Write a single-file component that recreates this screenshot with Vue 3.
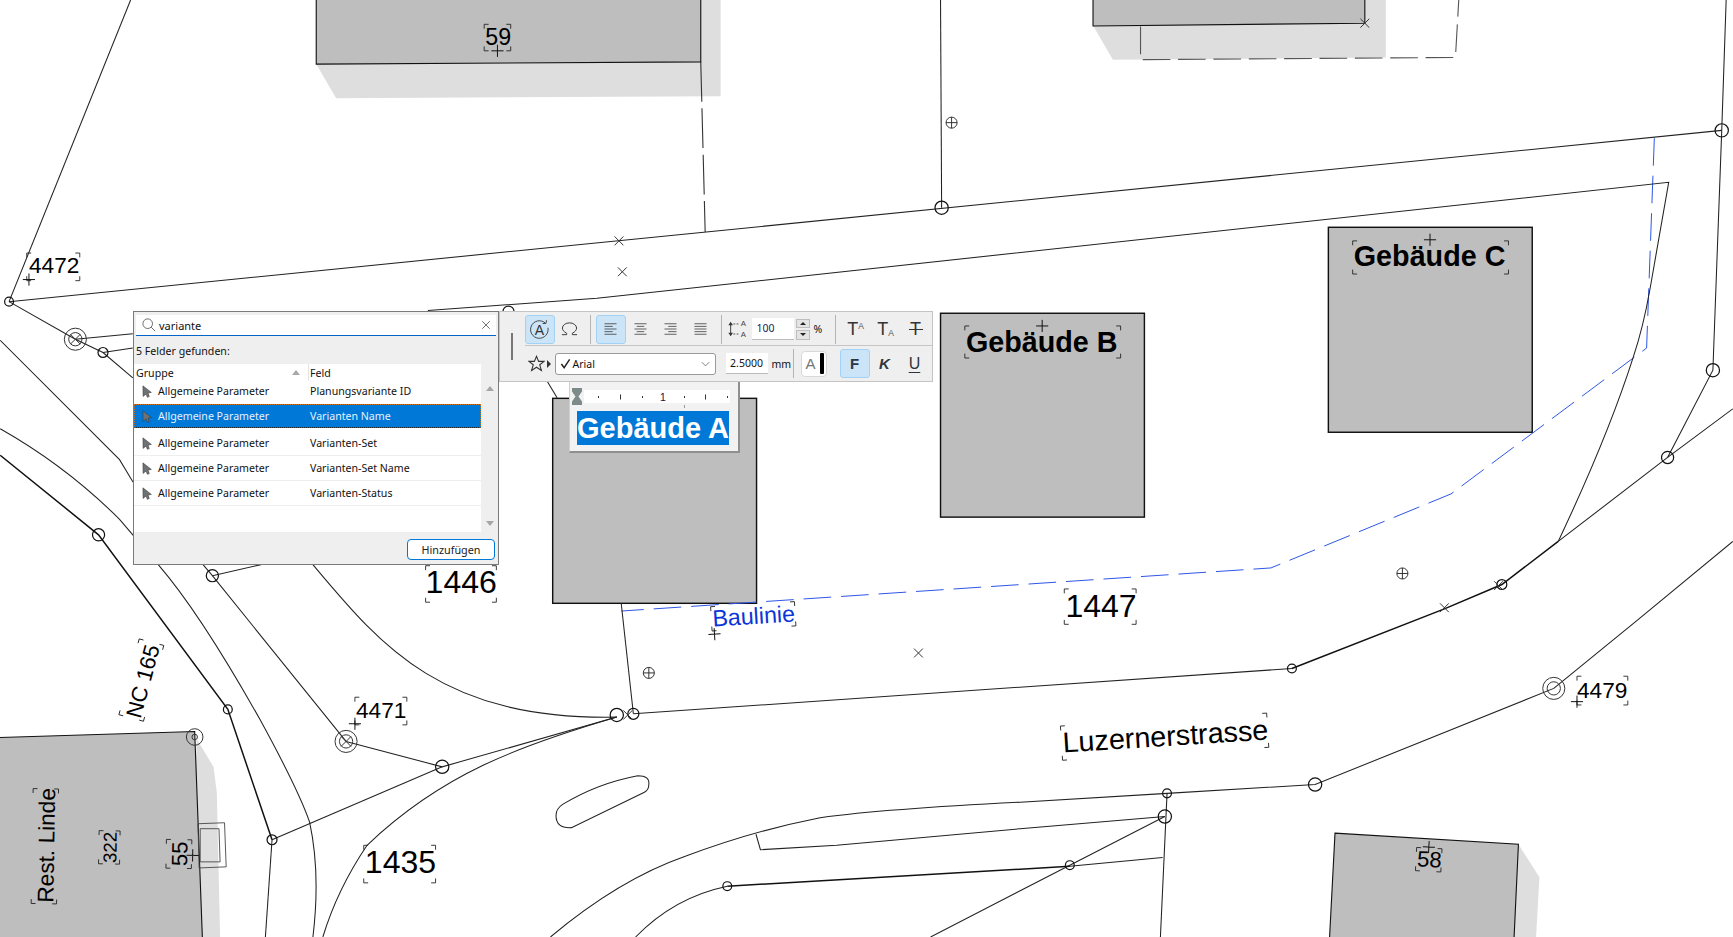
<script setup>
const thin = [
  'M118 0 L8 273',
  'M8 273 L1558 118',
  'M387 281 L540 270 L1510 165 L1493 262 Q1487 296 1478 323 Q1455 395 1410 490',
  'M851 0 L852 188',
  'M1562 0 L1558 118 L1550 335 L1509 414',
  'M1568 370 L1509 414 L1410 490',
  'M1169 605 L573 646',
  'M8 273 L68 307 L93 319 L120 342',
  'M68 307 L120 302',
  'M93 319 L120 315',
  'M0 308 L108 416 L120 436 L192 521 L313 671',
  'M0 388 Q60 422 108 470 L143 511 Q181 555 235 651 Q270 715 280 744 Q290 790 283 848',
  'M246 760 L240 848',
  'M192 521 L236 511',
  'M283 511 C345 585 400 652 558 649',
  'M562 546 L573 646',
  'M558 649 L400 694 L313 671',
  'M400 694 L246 760',
  'M558 649 C470 675 400 700 332 765 Q305 805 292 848',
  'M1406 623 L1190 710 L1056 718 L923 726 Q802 732 742 740 Q681 752 620 775 Q560 796 498 848',
  'M1406 623 L1482 561 L1568 490',
  'M684 755 L688 769 L757 765 L923 750 L1054 739',
  'M1056 718 L1050 848',
  'M1054 739 L968 783 L842 848',
  'M1052 776 L968 784',
  'M658 802 Q610 812 575 848',
  'M495 345 L504 360',
  'M509 728 Q540 709 577 702 Q588 702 587 710 Q587 715 583 717 L517 749 Q503 750 503 738 Q503 732 509 728Z'
]
const thick = [
  'M1410 490 L1359 529 L1307 551 L1169 605',
  'M658 802 L968 784',
  'M0 412 L89 484 L206 642 L246 760'
]
const circles = [
  [8, 273, 4], [93, 319, 4.5], [852, 188, 6], [1558, 118, 6], [1550, 335, 6], [1509, 414, 5.5],
  [1359, 529, 4.5], [1169, 605, 4], [573, 646, 5], [558, 647, 6], [89, 484, 5.5], [206, 642, 4],
  [192, 521, 5.5], [400, 694, 6], [246, 760, 4.5], [1190, 710, 6], [1056, 718, 4], [1054, 739, 6],
  [968, 783, 4], [658, 802, 4], [460, 282, 5]
]
const ringed = [[68, 307, 10, 6, 1], [313, 671, 10, 6, 1], [1406, 623, 10, 6, 0], [176, 667, 7.5, 2.5, 0]]
const targets = [[861, 111], [587, 609], [1269, 519]]
const crosses = [[560, 218], [563, 246], [831, 591], [1307, 550], [1235, 21], [568, 647], [1356, 530]]

const corners = (x0, y0, x1, y1) =>
  `M${x0} ${y0 + 4}V${y0}H${x0 + 4}M${x1 - 4} ${y0}H${x1}V${y0 + 4}M${x1} ${y1 - 4}V${y1}H${x1 - 4}M${x0 + 4} ${y1}H${x0}V${y1 - 4}`

const labels = [
  { t: '59', x: 439, y: 41, s: 21, r: 0, b: [-1, -19, 23, 5], p: [11, 5] },
  { t: '4472', x: 26, y: 247, s: 20.5, r: 0, b: [-2, -18, 46, 7], p: [0, 6] },
  { t: '4471', x: 322, y: 650, s: 20.5, r: 0, b: [-1, -19, 46, 6], p: [-1, 5] },
  { t: '4479', x: 1427, y: 632, s: 20.5, r: 0, b: [0, -20, 46, 6], p: [0, 3] },
  { t: '1446', x: 385, y: 537, s: 29, r: 0, b: [0, -25, 64, 8] },
  { t: '1447', x: 964, y: 558, s: 29, r: 0, b: [-1, -25, 64, 7] },
  { t: '1435', x: 330, y: 790, s: 29, r: 0, b: [-1, -25, 64, 9] },
  { t: 'Luzernerstrasse', x: 962, y: 681, s: 26, r: -3.6, b: [-1, -24, 186, 7] },
  { t: 'Baulinie', x: 645, y: 567, s: 21, r: -3.5, b: [-1, -18, 75, 4], p: [1, 7], c: '#0a35d8' },
  { t: 'NC 165', x: 127, y: 651, s: 20, r: -75, b: [-1, -20, 70, 3] },
  { t: 'Rest. Linde', x: 48, y: 817, s: 20.5, r: -89, b: [-1, -20, 103, 3] },
  { t: '322', x: 105, y: 781, s: 16.8, r: -89, b: [-1, -16, 29, 3] },
  { t: '55', x: 169, y: 784, s: 20, r: -89, b: [-2, -19, 24, 4], p: [10, 5] },
  { t: '58', x: 1282, y: 784, s: 20, r: 3, b: [-1, -17, 22, 4], p: [10, -18] },
  { t: 'Gebäude C', x: 1225, y: 241, s: 26, r: 0, w: 700, b: [-1, -23, 140, 7], p: [69, -24] },
  { t: 'Gebäude B', x: 874, y: 319, s: 26, r: 0, w: 700, b: [-1, -24, 140, 5], p: [69, -24] }
]

const rows = [
  { group: 'Allgemeine Parameter', field: 'Planungsvariante ID' },
  { group: 'Allgemeine Parameter', field: 'Varianten Name', sel: true },
  { group: 'Allgemeine Parameter', field: 'Varianten-Set' },
  { group: 'Allgemeine Parameter', field: 'Varianten-Set Name' },
  { group: 'Allgemeine Parameter', field: 'Varianten-Status' }
]
const alignments = [
  { active: true, d: 'M2 2H18M2 5.5H13M2 9H18M2 12.5H13M2 16H18' },
  { d: 'M2 2H18M5 5.5H15M2 9H18M5 12.5H15M2 16H18' },
  { d: 'M2 2H18M7 5.5H18M2 9H18M7 12.5H18M2 16H18' },
  { d: 'M2 2H18M2 5.5H18M2 9H18M2 12.5H18M2 16H18' }
]
const rulerTicks = [
  { x: 14, h: 2 }, { x: 36, h: 5 }, { x: 58, h: 2 }, { x: 100, h: 2 }, { x: 121, h: 5 }, { x: 143, h: 2 }
]
</script>

<template>
  <div class="page">
    <svg class="plan" viewBox="0 0 1568 848">
      <g class="shadow">
        <polygon points="286,58 304,89 652,87 652,0 286,0" />
        <polygon points="989,23 1007,54 1254,52 1254,0 989,0" />
        <polygon points="178,669 193,694 196,717 199,848 170,848" />
        <polygon points="1374,764 1393,794 1390,848 1360,848" />
      </g>
      <g class="building thin">
        <polygon points="286,-2 634,-2 634,56 286,58" />
        <polygon points="989,-2 1235,-2 1235,21 989,23.5" />
        <polygon points="-2,667.5 176,662 183,850 -2,850" />
        <polygon points="1208,754 1374,764 1370,850 1203,850" />
      </g>
      <g class="building solid">
        <rect x="500" y="360.5" width="184.5" height="185.5" />
        <rect x="851" y="283.5" width="184.5" height="184.5" />
        <rect x="1202" y="205.7" width="184.5" height="185.5" />
      </g>
      <path class="annex" d="M179 745.5 L203 744.6 L204.5 784.5 L180 785.5Z M181 750 L198 750 L199 780 L181 780Z" />
      <path class="dash-black" d="M634 56 L638 210" />
      <path class="dash-gray" d="M1032 24 L1032 54 L1317 52 L1320 0" />
      <path class="line-blue" d="M1497 125 L1490 315 L1313 447 L1150 514 L562 553" />
      <path v-for="(d, i) in thin" :key="'t' + i" class="line" :d="d" />
      <path v-for="(d, i) in thick" :key="'k' + i" class="line heavy" :d="d" />
      <circle v-for="(c, i) in circles" :key="'c' + i" class="mark" :cx="c[0]" :cy="c[1]" :r="c[2]" />
      <g v-for="(c, i) in ringed" :key="'r' + i" class="mark-thin">
        <circle :cx="c[0]" :cy="c[1]" :r="c[2]" />
        <circle :cx="c[0]" :cy="c[1]" :r="c[3]" />
        <path v-if="c[4]" :d="`M${c[0] - 4.5} ${c[1] - 4.5}l9 9m0 -9l-9 9`" />
      </g>
      <g v-for="(c, i) in targets" :key="'g' + i" class="mark-thin">
        <circle :cx="c[0]" :cy="c[1]" r="5" />
        <path :d="`M${c[0] - 5} ${c[1]}h10M${c[0]} ${c[1] - 5}v10`" />
      </g>
      <path
        v-for="(c, i) in crosses"
        :key="'x' + i"
        class="mark-thin"
        :d="`M${c[0] - 4} ${c[1] - 4}l8 8m0 -8l-8 8`"
      />
      <g v-for="l in labels" :key="l.t" :transform="`translate(${l.x} ${l.y}) rotate(${l.r})`">
        <path class="corners" :d="corners(...l.b)" />
        <path v-if="l.p" class="plus" :d="`M${l.p[0] - 5.5} ${l.p[1]}h11M${l.p[0]} ${l.p[1] - 5.5}v11`" />
        <text class="label" :font-size="l.s" :font-weight="l.w || 400" :fill="l.c || '#000'">{{ l.t }}</text>
      </g>
    </svg>

    <section class="fields">
      <div class="search">
        <svg class="search-icon" viewBox="0 0 16 16">
          <circle cx="6.5" cy="6.5" r="5.5" />
          <path d="M10.5 10.5L15 15" />
        </svg>
        <span class="search-text">variante</span>
        <svg class="search-clear" viewBox="0 0 12 12"><path d="M1.5 1.5l9 9m0-9l-9 9" /></svg>
      </div>
      <div class="found">5 Felder gefunden:</div>
      <div class="list-wrap">
        <div class="list">
          <div class="head">
            <div class="head-group">
              <span>Gruppe</span>
              <i class="sort"></i>
            </div>
            <div class="head-field">Feld</div>
          </div>
          <div v-for="r in rows" :key="r.field" class="row" :class="{ sel: r.sel }">
            <svg class="pointer" viewBox="0 0 11 14">
              <path d="M1 .8 L10.3 8 L6.6 8.7 L8 12.6 L5.9 13.4 L4.5 9.8 L1.2 12.4Z" />
            </svg>
            <span class="cell-group">{{ r.group }}</span>
            <span class="cell-field">{{ r.field }}</span>
          </div>
        </div>
        <div class="scroll">
          <i class="arrow up"></i>
          <i class="arrow down"></i>
        </div>
      </div>
      <div class="footer"><button class="add">Hinzufügen</button></div>
    </section>

    <section class="toolbar">
      <i class="grip"></i>
      <div class="bars">
        <div class="bar top">
          <span class="tbtn on big">
            <svg viewBox="0 0 24 24" class="ico22">
              <path class="ico-line" d="M18.5 4.6A10 10 0 1 0 21.6 10" />
              <path class="ico-line" d="M15.5 5.2L19.4 5L20 1.4" />
              <text x="12" y="18.5" text-anchor="middle" class="ico-a">A</text>
            </svg>
          </span>
          <span class="tbtn big">
            <svg viewBox="0 0 18 14" class="ico-omega">
              <path class="ico-line" d="M1 13H6V11.5C3 10 1.5 8 1.5 6A7.5 5.5 0 0 1 16.5 6C16.5 8 15 10 12 11.5V13H17" />
            </svg>
          </span>
          <i class="sep"></i>
          <span v-for="(a, i) in alignments" :key="i" class="tbtn big" :class="{ on: a.active }">
            <svg viewBox="0 0 20 18" class="ico-align"><path class="ico-line" :d="a.d" /></svg>
          </span>
          <i class="sep"></i>
          <svg viewBox="0 0 24 22" class="ico-spacing">
            <path class="ico-solid" d="M4 3L6.5 7H1.5ZM4 19L1.5 15H6.5ZM3.5 6H4.5V16H3.5Z" />
            <path class="ico-dash" d="M7 5.5H14M7 16.5H14" />
            <text x="15" y="8" class="ico-small">A</text>
            <text x="15" y="20" class="ico-small">A</text>
          </svg>
          <span class="num pct">100</span>
          <span class="spin">
            <i class="spin-btn"><b class="tri-up"></b></i>
            <i class="spin-btn"><b class="tri-down"></b></i>
          </span>
          <span class="unit percent">%</span>
          <i class="sep"></i>
          <span class="glyph"><span class="big-t">T</span><sup class="small-a">A</sup></span>
          <span class="glyph"><span class="big-t">T</span><sub class="small-a">A</sub></span>
          <span class="glyph strike"><span class="big-t">T</span></span>
        </div>
        <div class="bar bottom">
          <svg viewBox="0 0 16 16" class="star">
            <path d="M8 1.2L10 6H15L11 9.2L12.6 14.6L8 11.5L3.4 14.6L5 9.2L1 6H6Z" />
          </svg>
          <i class="play"></i>
          <div class="combo">
            <svg viewBox="0 0 12 12" class="check"><path d="M1.5 6.5L4.5 10.5L10.5 1.5" /></svg>
            <span>Arial</span>
            <svg viewBox="0 0 12 8" class="chev"><path d="M1 1.5L6 6.5L11 1.5" /></svg>
          </div>
          <span class="num size">2.5000</span>
          <span class="unit mm">mm</span>
          <i class="sep short"></i>
          <span class="colour"><span>A</span><i></i></span>
          <span class="tbtn style on"><b>F</b></span>
          <span class="tbtn style"><b><em>K</em></b></span>
          <span class="tbtn style"><span class="under">U</span></span>
        </div>
      </div>
    </section>

    <section class="editor">
      <i class="hour"></i>
      <div class="ruler">
        <i v-for="t in rulerTicks" :key="t.x" class="tick" :style="{ left: t.x + 'px', height: t.h + 'px' }"></i>
        <span class="one">1</span>
        <i class="tick-below"></i>
      </div>
      <div class="textarea"><span class="selected">Gebäude A</span></div>
    </section>
  </div>
</template>

<style scoped>
.page {
  position: relative;
  width: 1733px;
  height: 937px;
  overflow: hidden;
  background: #fff;
  font-family: "Noto Sans", "Open Sans", sans-serif;
  color: #111;
}
.plan { display: block; width: 1733px; height: 937px; }
.shadow polygon { fill: #dedede; }
.building polygon, .building rect { fill: #bebebe; stroke: #111; }
.building.thin polygon { stroke-width: 1; }
.building.solid rect { stroke-width: 1.3; }
.annex { fill: none; stroke: #444; stroke-width: 0.8; }
.line { fill: none; stroke: #222; stroke-width: 0.95; }
.line.heavy { stroke-width: 1.35; stroke: #111; }
.dash-black { fill: none; stroke: #333; stroke-width: 1; stroke-dasharray: 36 6; }
.dash-gray { fill: none; stroke: #555; stroke-width: 1; stroke-dasharray: 25 7; }
.line-blue { fill: none; stroke: #2c55e6; stroke-width: 0.9; stroke-dasharray: 25 9; }
.mark { fill: none; stroke: #111; stroke-width: 1.1; }
.mark-thin circle, .mark-thin path, path.mark-thin { fill: none; stroke: #333; stroke-width: 0.9; }
.corners { fill: none; stroke: #222; stroke-width: 0.8; }
.plus { fill: none; stroke: #111; stroke-width: 0.9; }
.label { font-family: "Liberation Sans", Arial, sans-serif; }

.fields {
  position: absolute;
  left: 133px;
  top: 311px;
  width: 366px;
  height: 254px;
  box-sizing: border-box;
  border: 1.5px solid #7a7a7a;
  background: #efefef;
  display: flex;
  flex-direction: column;
  font-size: 10.6px;
}
.search {
  margin: 3px 2px 0 2px;
  height: 21px;
  box-sizing: border-box;
  padding-left: 6px;
  padding-right: 5px;
  background: #fff;
  border-bottom: 1.5px solid #0064c8;
  display: flex;
  align-items: center;
  gap: 3px;
  font-size: 11px;
}
.search-icon { width: 14px; height: 14px; fill: none; stroke: #666; stroke-width: 1.1; }
.search-text { flex: 1; }
.search-clear { width: 10px; height: 10px; fill: none; stroke: #555; stroke-width: 1; }
.found { padding: 6px 0 4px 2px; line-height: 18px; height: 28px; box-sizing: border-box; }
.list-wrap { display: flex; height: 168px; flex: none; }
.list { width: 347px; background: #fff; }
.head { display: flex; height: 17px; line-height: 18px; }
.head-group {
  width: 175px;
  padding-left: 2px;
  display: flex;
  justify-content: space-between;
  align-items: center;
  box-sizing: border-box;
  border-right: 1px solid #e4e4e4;
  padding-right: 8px;
}
.head-field { padding-left: 1px; }
.sort {
  width: 0; height: 0;
  border-left: 4.5px solid transparent;
  border-right: 4.5px solid transparent;
  border-bottom: 5px solid #a8a8a8;
}
.row {
  display: flex;
  align-items: center;
  height: 25px;
  box-sizing: border-box;
  border-bottom: 1px solid #eee;
  padding-left: 8px;
}
.row:nth-child(2) { height: 20px; margin-bottom: 3px; border-bottom: 0; }
.row.sel {
  height: 24px;
  background: #0078d7;
  color: #e6f2fc;
  border: 1px dotted #c8701e;
  border-bottom-color: #222;
  margin-bottom: 3px;
  padding-left: 7px;
}
.pointer { width: 10px; height: 13px; flex: none; fill: #6f7275; stroke: #3a3a3a; stroke-width: 0.6; }
.cell-group { margin-left: 6px; width: 152px; flex: none; }
.scroll {
  width: 17px;
  display: flex;
  flex-direction: column;
  justify-content: space-between;
  align-items: center;
  padding: 22px 0 6px;
  box-sizing: border-box;
}
.arrow { width: 0; height: 0; border-left: 4.5px solid transparent; border-right: 4.5px solid transparent; }
.arrow.up { border-bottom: 5.5px solid #a6a6a6; }
.arrow.down { border-top: 5.5px solid #a6a6a6; }
.footer { flex: 1; display: flex; justify-content: flex-end; align-items: center; padding-right: 3px; padding-top: 3px; }
.add {
  width: 88px;
  height: 21px;
  padding: 0;
  border: 1px solid #0078d7;
  border-radius: 4px;
  background: #fff;
  font: inherit;
  font-size: 10.8px;
  color: #222;
}

.toolbar {
  position: absolute;
  left: 499px;
  top: 311px;
  width: 434px;
  height: 71px;
  box-sizing: border-box;
  border: 1px solid #c4c4c4;
  background: #efefef;
  display: flex;
  align-items: stretch;
}
.grip { width: 1.5px; height: 27px; background: #777; margin: 21px 12px 0 11px; flex: none; }
.bars { flex: 1; display: flex; flex-direction: column; }
.bar { display: flex; align-items: center; }
.bar.top { height: 34px; border-bottom: 1px solid #c6c6c6; box-sizing: border-box; padding-top: 1px; }
.bar.bottom { flex: 1; }
.tbtn {
  display: inline-flex;
  align-items: center;
  justify-content: center;
  box-sizing: border-box;
  border: 1px solid transparent;
  border-radius: 3px;
  flex: none;
}
.tbtn.on { background: #cce4f7; border-color: #a2d2f6; }
.tbtn.big { width: 30px; height: 29px; }
.ico22 { width: 21px; height: 21px; }
.ico-omega { width: 17px; height: 14px; }
.ico-line { fill: none; stroke: #333; stroke-width: 1; }
.ico-a { font: 16px "Liberation Sans", sans-serif; fill: #333; }
.ico-align { width: 15px; height: 14px; }
.sep { width: 1px; height: 29px; background: #b4b4b4; margin: 0 5px; flex: none; }
.sep.short { margin: 0 7px 0 5px; }
.ico-spacing { width: 22px; height: 22px; margin: 0 3px 0 0; flex: none; }
.ico-solid { fill: #333; }
.ico-dash { stroke: #444; stroke-width: 1; stroke-dasharray: 2 1.5; fill: none; }
.ico-small { font: 8.5px "Liberation Sans", sans-serif; fill: #444; }
.num {
  display: inline-block;
  background: #fff;
  box-sizing: border-box;
  font-size: 10.5px;
  border-bottom: 1px solid #bbb;
  flex: none;
}
.pct { width: 42px; height: 22px; line-height: 21px; padding-left: 5px; color: #1e1a50; }
.spin { display: flex; flex-direction: column; gap: 2px; margin-left: 2px; flex: none; }
.spin-btn {
  width: 14px; height: 9.5px;
  background: #e4e4e4;
  border: 1px solid #bdbdbd;
  box-sizing: border-box;
  display: flex; align-items: center; justify-content: center;
}
.tri-up { border-left: 3px solid transparent; border-right: 3px solid transparent; border-bottom: 3.5px solid #222; }
.tri-down { border-left: 3px solid transparent; border-right: 3px solid transparent; border-top: 3.5px solid #222; }
.unit { font-size: 10.5px; flex: none; }
.percent { margin-left: 4px; width: 16px; }
.glyph {
  position: relative;
  width: 30px;
  height: 24px;
  display: flex;
  align-items: center;
  justify-content: center;
  font-family: "Liberation Sans", sans-serif;
  color: #333;
  flex: none;
}
.big-t { font-size: 18px; line-height: 18px; }
.small-a { font-size: 8.5px; line-height: 8px; color: #555; }
sup.small-a { align-self: flex-start; margin-top: 5px; }
sub.small-a { align-self: flex-end; margin-bottom: 4px; }
.strike::after {
  content: "";
  position: absolute;
  left: 8px;
  right: 8px;
  top: 12px;
  height: 1.2px;
  background: #333;
}
.star { width: 17px; height: 17px; margin-left: 3px; fill: none; stroke: #333; stroke-width: 1; flex: none; }
.play { width: 0; height: 0; margin-left: 2px; border-left: 4px solid #333; border-top: 4px solid transparent; border-bottom: 4px solid transparent; flex: none; }
.combo {
  width: 161px;
  height: 22px;
  margin-left: 4px;
  box-sizing: border-box;
  background: #fff;
  border: 1px solid #9a9a9a;
  border-radius: 3px;
  display: flex;
  align-items: center;
  padding: 0 4px;
  font-size: 10.5px;
  flex: none;
}
.check { width: 11px; height: 11px; margin: 0 2px 0 0; fill: none; stroke: #222; stroke-width: 1.6; }
.combo span { flex: 1; }
.chev { width: 9px; height: 6px; fill: none; stroke: #555; stroke-width: 1; margin-right: 1px; }
.size { width: 42px; height: 21px; line-height: 21px; text-align: center; margin-left: 10px; }
.mm { margin-left: 4px; width: 16px; }
.colour {
  width: 26px;
  height: 26px;
  box-sizing: border-box;
  background: #fff;
  border: 1px solid #d8d8d8;
  border-radius: 4px;
  display: flex;
  align-items: center;
  justify-content: space-between;
  padding: 0 2px 0 4px;
  font: 15px "Liberation Sans", sans-serif;
  color: #777;
  flex: none;
}
.colour i { width: 4px; height: 21px; background: #000; border-radius: 1px; }
.tbtn.style { width: 30px; height: 29px; font: 15px "Liberation Sans", sans-serif; color: #2d3640; }
.colour + .tbtn.style { margin-left: 13px; }
.under { font-size: 16px; text-decoration: underline; text-underline-offset: 3px; text-decoration-thickness: 1.4px; }

.editor {
  position: absolute;
  left: 569px;
  top: 382px;
  width: 171px;
  height: 71px;
  box-sizing: border-box;
  background: #f2f2f2;
  border-left: 1px solid #d0d0d0;
  border-right: 2px solid #8f8f8f;
  border-bottom: 2px solid #8f8f8f;
  padding: 8px 8px 0 7px;
}
.hour {
  position: absolute;
  left: 2px;
  top: 6px;
  width: 10px;
  height: 17px;
  background: #7d8a8a;
  clip-path: polygon(0 0, 100% 0, 100% 20%, 65% 50%, 100% 80%, 100% 100%, 0 100%, 0 80%, 35% 50%, 0 20%);
}
.ruler {
  position: relative;
  height: 13px;
  margin-left: 7px;
  background: #fff;
}
.tick { position: absolute; top: 7px; width: 1px; background: #333; transform: translateY(-50%); }
.tick-below { position: absolute; left: 100px; top: 15px; width: 1px; height: 3px; background: #999; }
.one {
  position: absolute;
  left: 76px;
  top: -1px;
  font: 10.5px/16px "Liberation Sans", sans-serif;
  color: #1a1040;
}
.textarea { margin-top: 8px; font: 700 29px/34px "Liberation Sans", sans-serif; white-space: nowrap; }
.selected { display: inline-block; width: 152px; height: 34px; background: #0078d7; color: #fff; overflow: hidden; }
</style>

<style>
html, body { margin: 0; background: #fff; }
</style>
